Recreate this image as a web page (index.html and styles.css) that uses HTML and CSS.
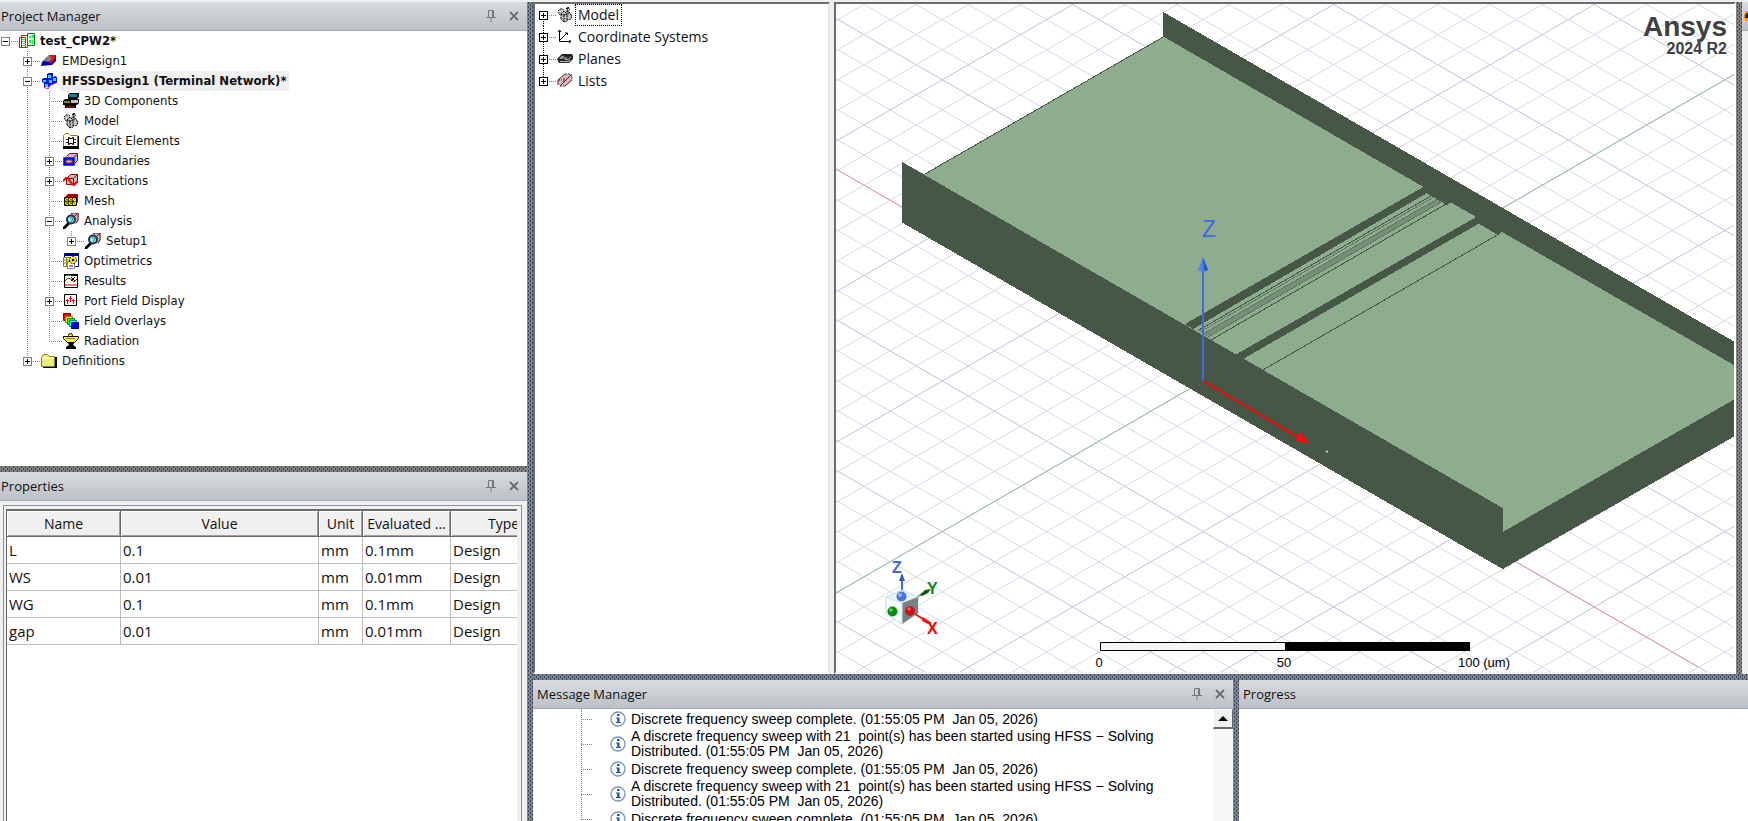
FILE: index.html
```html
<!DOCTYPE html>
<html lang="en">
<head>
<meta charset="utf-8">
<title>test_CPW2 - Ansys Electronics Desktop</title>
<link rel="stylesheet" href="styles.css">
</head>
<body>
<svg class="defs" aria-hidden="true">
  <symbol id="i-project" viewBox="0 0 16 16"><path d="M2.500 2.500h6v12h-6zM.5 4.500h6v10h-6z" fill="#fff" stroke="#008000"/><path d="M8.500.5h7v12h-7z" fill="#fff" stroke="#008000"/><path d="M10 3h2v2h-2zM13 2h2v3h-2zM10 7h2v3h-2zM13 7h1v4h-1zM3 6h3v1H3zM3 8h3v1H3zM4 10h3v1H4zM3 12h4v1H3z" fill="#0f4"/></symbol>
  <symbol id="i-em" viewBox="0 0 16 16"><path d="M1 9l5-5 9-2v5l-5 5-10 1z" fill="#00c"/><path d="M2 8l6-6h6l-5 7z" fill="#808080"/><path d="M8 2l5 0q2 2 0 5l-3 3-3-1 3-2q2-3-2-4z" fill="#f00"/><path d="M1 10h9l5-5v3l-4 4H1z" fill="#00a"/></symbol>
  <symbol id="i-hfss" viewBox="0 0 16 16"><path d="M3 14l3 1 4-1 2-3 3-2V5h1v5l-3 1-3 3-3 2-4-1z" fill="#f00"/><path d="M6 1l2-1h4v4l3-1 1 2v4l-4 2-2 1-2 2H3v-4l-2-1V6l2-1h3z" fill="#00f"/><path d="M7 2h3v3H7zM2 7h3v2H2zM12 5h3v3h-3zM8 7h3v3H8zM4 11h3v3H4z" fill="#0ef"/></symbol>
  <symbol id="i-3d" viewBox="0 0 16 16"><path d="M5 2l2-2h9v4l-2 2H5z" fill="#000"/><path d="M6 2l1-1h8l-1 1v2H6z" fill="#088"/><path d="M0 8l2-2h14v4l-2 2H0z" fill="#000"/><path d="M1 8h6v2H1z" fill="#880"/><path d="M8 7h7v3H8z" fill="#c0c0c0"/><path d="M2 12h11v3H2z" fill="#000"/><path d="M3 13h8v2H3z" fill="#900"/></symbol>
  <symbol id="i-model" viewBox="0 0 16 16"><path d="M1 4l3-2 3 3 3-4 2 3 3 4-1 3-4 1-3 3-4-3 1-4z" fill="#c0c0c0"/><path d="M1 4l2-2h3l1 2M1 5l2 3M4 7l3-3 3 3-3 1zM4 7v5l3 3 3-1V7M7 8v7M10 5l1-5M11 0v8M9 2l2-2 2 3M12 5l3 4-1 3-4 1" fill="none" stroke="#000" stroke-width="1" stroke-dasharray="2 .7"/></symbol>
  <symbol id="i-circuit" viewBox="0 0 16 16"><path d="M.5 13.500v-11l2-2h3l2 2h7v11z" fill="#fffff0" stroke="#880"/><path d="M0 13h15V3h1v13H0z" fill="#000"/><path d="M3 6h3v1H3zM3 9h3v1H3zM10 6h3v1h-3zM10 9h3v1h-3z" fill="#900"/><path d="M5.500 4.500h1v1h3v-1h1v7h-1v-1h-3v1h-1z" fill="#fff" stroke="#000"/></symbol>
  <symbol id="i-bound" viewBox="0 0 16 16"><path d="M3 3l3-2h9v7l-3 3H3z" fill="#c0c0c0"/><path d="M3.500 3.500l3-3h8v7l-3 3M11 4l4-3" fill="none" stroke="#900"/><path d="M1.500 5.500h9v6h-9z" fill="#ccc" stroke="#00f" stroke-width="2.500"/><path d="M3 7h6v3H3z" fill="#ccc" stroke="#900"/></symbol>
  <symbol id="i-excite" viewBox="0 0 16 16"><path d="M3.500 5.500l4-4h7v6l-4 4h-7z" fill="#c0c0c0" stroke="#900"/><path d="M3 5.500h7.500v6M10.500 5.500l4-4" fill="none" stroke="#900"/><path d="M0 8l3-3 2 0 4 6 2 1 4-4" fill="none" stroke="#f00" stroke-width="2"/></symbol>
  <symbol id="i-mesh" viewBox="0 0 16 16"><path d="M2 4l3-3h10v8l-3 3z" fill="#900"/><path d="M1.500 4.500h12v8h-12z" fill="#ff0" stroke="#000"/><path d="M1 8.500h12M5.500 4v9M9.500 4v9M2 5l4 3.500L2 12M6 5l4 3.500L6 12M13 5L9.500 8.500 13 12M6 5L2 8.500 6 12M10 5L6 8.500l4 3.500" fill="none" stroke="#000" stroke-width=".6"/></symbol>
  <symbol id="i-analysis" viewBox="0 0 16 16"><path d="M6 3l3-3h7v7l-3 4H8z" fill="#c0c0c0"/><path d="M8 1l1-1h6v7l-2 3M12 3l3-3" fill="none" stroke="#900"/><path d="M5 9l-5 5v2h2l5-5z" fill="#000"/><circle cx="8" cy="6.500" r="4" fill="#9ef" stroke="#234" stroke-width="2"/><path d="M7 5h3v1L8 9" stroke="#088" fill="none"/></symbol>
  <symbol id="i-optim" viewBox="0 0 16 16"><path d="M1.500.5h14v13h-14z" fill="#fff" stroke="#00a"/><path d="M2 0h14v3H2z" fill="#008"/><path d="M.5 4.500h8v9h-8z" fill="#fff" stroke="#880"/><path d="M1 7h7M1 10h7M3.500 4v9" stroke="#880"/><path d="M4.500 8.500h7v7h-7z" fill="#fff" stroke="#888"/><circle cx="10" cy="7" r="3.500" fill="#ff0" stroke="#000" stroke-dasharray="2 1"/><circle cx="10" cy="7" r="1.300" fill="#000"/><path d="M6 13h4" stroke="#00f"/></symbol>
  <symbol id="i-results" viewBox="0 0 16 16"><path d="M1.500 1.500h13v13h-13z" fill="#fff" stroke="#000"/><path d="M1 1h14v2H1z" fill="#000"/><path d="M3 2h5v1H3z" fill="#0a0"/><path d="M2 8l3-3 3 1 3 3 3-3M2 12h12" fill="none" stroke="#c00"/><path d="M8 4l4 4M12 4L8 8" stroke="#000"/></symbol>
  <symbol id="i-port" viewBox="0 0 16 16"><path d="M1.500 1.500h12v11h-12z" fill="#fff" stroke="#000"/><path d="M4.500 11V6M3 7.500h3M7.500 9V3M6 5.500h3M10.500 11V6M9 7.500h3" fill="none" stroke="#f00"/></symbol>
  <symbol id="i-field" viewBox="0 0 16 16"><path d="M.5.5h7v7h-7z" fill="#f00" stroke="#800"/><path d="M2.500 3.500h7v6h-7z" fill="#ff0" stroke="#880"/><path d="M4.500 5.500h7v6h-7z" fill="#0f0" stroke="#080"/><path d="M6.500 7.500h7v6h-7z" fill="#0ff" stroke="#088"/><path d="M8.500 9.500h7v6h-7z" fill="#00f" stroke="#008"/></symbol>
  <symbol id="i-rad" viewBox="0 0 16 16"><circle cx="7.500" cy="2.500" r="2" fill="#ff0" stroke="#000"/><path d="M.5 3.500h15v2l-4 4h-7l-4-4z" fill="#ff0" stroke="#000"/><path d="M3 5.500h9" stroke="#880"/><path d="M5 10h6l-1 2 3 2v2H3v-2l3-2z" fill="#000"/></symbol>
  <symbol id="i-folder" viewBox="0 0 16 16"><path d="M2 14h13V5h-1" fill="none" stroke="#000" stroke-width="2"/><path d="M.5 4.500l2-3h4l2 2h5v10H.5z" fill="#ee7" stroke="#880"/><path d="M1 5h12" stroke="#fff"/></symbol>
  <symbol id="i-cs" viewBox="0 0 16 16"><path d="M2.500 1v11.500H14M2 12l8-8M1 3l1.500-2L4 3M12 11l2 1.500-2 1.500M8 4h2.500v2" fill="none" stroke="#000"/></symbol>
  <symbol id="i-planes" viewBox="0 0 16 16"><path d="M0 8l5-5h10l1 2v3l-4 4H2z" fill="#222"/><path d="M2 8l3-3h2l-3 3zM8 8h3l3-3v1l-3 3H8zM3 10h8l3-2-2 3H3z" fill="#bbb"/><path d="M6 6h5l-2 2H5z" fill="#777"/></symbol>
  <symbol id="i-lists" viewBox="0 0 16 16"><path d="M1 7l7-6h6l1 1v5l-7 6H3l-2-2z" fill="#c0c0c0"/><path d="M1 7l7-6M1 7v5M3 13L14 2M8 13l7-6M7 5v4" fill="none" stroke="#900"/><path d="M8 1h6l1 2v4M3 13h5M1 7h4" fill="none" stroke="#444" stroke-dasharray="2 1"/></symbol>
  <symbol id="i-info" viewBox="0 0 16 16"><circle cx="8" cy="8" r="7" fill="#fff" stroke="#7d93b8" stroke-width="1.300"/><path d="M7 3h2.500v2H7zM6 6.500h3.500V11H11v1H6v-1h1.200V7.500H6z" fill="#1d4fc4"/></symbol>
  <symbol id="i-pin" viewBox="0 0 10 12"><path d="M2.500 7V.5h5V7M6.500 1v6M0 7.500h10M5 8v4" fill="none" stroke="#777"/></symbol>
  <symbol id="i-close" viewBox="0 0 10 10"><path d="M1 1l8 8M9 1L1 9" stroke="#6c6c6c" stroke-width="1.800"/></symbol>
</svg>

<main class="app">
  <div class="side">
    <section class="panel">
      <header class="bar"><h2>Project Manager</h2><button class="tool" aria-label="Auto hide"><svg width="10" height="12"><use href="#i-pin"/></svg></button><button class="tool" aria-label="Close"><svg width="10" height="10"><use href="#i-close"/></svg></button></header>
      <div class="body">
        <ul class="tree root">
          <li><div class="row strong"><span class="twig"><button class="exp open" aria-label="Collapse"></button></span><svg class="ico"><use href="#i-project"/></svg><span class="lbl">test_CPW2*</span></div>
            <ul class="tree">
              <li><div class="row"><span class="twig"><button class="exp" aria-label="Expand"></button></span><svg class="ico"><use href="#i-em"/></svg><span class="lbl">EMDesign1</span></div></li>
              <li><div class="row strong"><span class="twig"><button class="exp open" aria-label="Collapse"></button></span><svg class="ico"><use href="#i-hfss"/></svg><span class="lbl sel">HFSSDesign1 (Terminal Network)*</span></div>
                <ul class="tree">
                  <li><div class="row"><span class="twig"></span><svg class="ico"><use href="#i-3d"/></svg><span class="lbl">3D Components</span></div></li>
                  <li><div class="row"><span class="twig"></span><svg class="ico"><use href="#i-model"/></svg><span class="lbl">Model</span></div></li>
                  <li><div class="row"><span class="twig"></span><svg class="ico"><use href="#i-circuit"/></svg><span class="lbl">Circuit Elements</span></div></li>
                  <li><div class="row"><span class="twig"><button class="exp" aria-label="Expand"></button></span><svg class="ico"><use href="#i-bound"/></svg><span class="lbl">Boundaries</span></div></li>
                  <li><div class="row"><span class="twig"><button class="exp" aria-label="Expand"></button></span><svg class="ico"><use href="#i-excite"/></svg><span class="lbl">Excitations</span></div></li>
                  <li><div class="row"><span class="twig"></span><svg class="ico"><use href="#i-mesh"/></svg><span class="lbl">Mesh</span></div></li>
                  <li><div class="row"><span class="twig"><button class="exp open" aria-label="Collapse"></button></span><svg class="ico"><use href="#i-analysis"/></svg><span class="lbl">Analysis</span></div>
                    <ul class="tree">
                      <li><div class="row"><span class="twig"><button class="exp" aria-label="Expand"></button></span><svg class="ico"><use href="#i-analysis"/></svg><span class="lbl">Setup1</span></div></li>
                    </ul>
                  </li>
                  <li><div class="row"><span class="twig"></span><svg class="ico"><use href="#i-optim"/></svg><span class="lbl">Optimetrics</span></div></li>
                  <li><div class="row"><span class="twig"></span><svg class="ico"><use href="#i-results"/></svg><span class="lbl">Results</span></div></li>
                  <li><div class="row"><span class="twig"><button class="exp" aria-label="Expand"></button></span><svg class="ico"><use href="#i-port"/></svg><span class="lbl">Port Field Display</span></div></li>
                  <li><div class="row"><span class="twig"></span><svg class="ico"><use href="#i-field"/></svg><span class="lbl">Field Overlays</span></div></li>
                  <li><div class="row"><span class="twig"></span><svg class="ico"><use href="#i-rad"/></svg><span class="lbl">Radiation</span></div></li>
                </ul>
              </li>
              <li><div class="row"><span class="twig"><button class="exp" aria-label="Expand"></button></span><svg class="ico"><use href="#i-folder"/></svg><span class="lbl">Definitions</span></div></li>
            </ul>
          </li>
        </ul>
      </div>
    </section>
    <div class="split"></div>
    <section class="panel">
      <header class="bar"><h2>Properties</h2><button class="tool" aria-label="Auto hide"><svg width="10" height="12"><use href="#i-pin"/></svg></button><button class="tool" aria-label="Close"><svg width="10" height="10"><use href="#i-close"/></svg></button></header>
      <div class="props">
        <div class="frame"><div class="sheet">
          <table>
            <colgroup><col class="c-name"><col class="c-value"><col class="c-unit"><col class="c-eval"><col class="c-type"></colgroup>
            <thead><tr><th>Name</th><th>Value</th><th>Unit</th><th>Evaluated ...</th><th>Type</th></tr></thead>
            <tbody>
              <tr><td>L</td><td>0.1</td><td>mm</td><td>0.1mm</td><td>Design</td></tr>
              <tr><td>WS</td><td>0.01</td><td>mm</td><td>0.01mm</td><td>Design</td></tr>
              <tr><td>WG</td><td>0.1</td><td>mm</td><td>0.1mm</td><td>Design</td></tr>
              <tr><td>gap</td><td>0.01</td><td>mm</td><td>0.01mm</td><td>Design</td></tr>
            </tbody>
          </table>
        </div></div>
      </div>
    </section>
  </div>
  <div class="split"></div>
  <div class="work">
    <div class="upper">
      <nav class="pane history">
        <ul class="tree model">
          <li><div class="row"><span class="twig"><button class="exp" aria-label="Expand"></button></span><svg class="ico"><use href="#i-model"/></svg><span class="lbl focus">Model</span></div></li>
          <li><div class="row"><span class="twig"><button class="exp" aria-label="Expand"></button></span><svg class="ico"><use href="#i-cs"/></svg><span class="lbl">Coordinate Systems</span></div></li>
          <li><div class="row"><span class="twig"><button class="exp" aria-label="Expand"></button></span><svg class="ico"><use href="#i-planes"/></svg><span class="lbl">Planes</span></div></li>
          <li><div class="row"><span class="twig"><button class="exp" aria-label="Expand"></button></span><svg class="ico"><use href="#i-lists"/></svg><span class="lbl">Lists</span></div></li>
        </ul>
      </nav>
      <section class="pane viewer">
        <svg class="scene" viewBox="836 4 898 668" preserveAspectRatio="xMidYMid slice">
          <defs>
            <g id="down"><path d="M836 199.200l898 518.500M836 229.300l898 518.500M836 259.400l898 518.500M836 289.500l898 518.500" class="minor"/><path d="M836 169l898 518.500" class="major"/></g>
            <g id="up"><path d="M836 623.100l898-518.500M836 653.200l898-518.500M836 683.300l898-518.500M836 713.500l898-518.500" class="minor"/><path d="M836 593l898-518.500" class="major"/></g>
          </defs>
          <g>
            <use href="#down" y="-753"/><use href="#down" y="-602.400"/><use href="#down" y="-451.800"/><use href="#down" y="-301.200"/><use href="#down" y="-150.600"/><use href="#down"/><use href="#down" y="150.600"/><use href="#down" y="301.200"/><use href="#down" y="451.800"/>
            <use href="#up" y="-602.400"/><use href="#up" y="-451.800"/><use href="#up" y="-301.200"/><use href="#up" y="-150.600"/><use href="#up"/><use href="#up" y="150.600"/><use href="#up" y="301.200"/><use href="#up" y="451.800"/>
          </g>
          <path d="M836 169l862 498" class="axis-x"/>
          <path d="M836 593l898-518.500" class="axis-y"/>
          <g shape-rendering="crispEdges">
            <path class="top" d="M925 174.500L1163 36.500L1450 200L1734 364.500V400L1502.700 532V569L902 222.500V162z"/>
            <path class="edge" d="M925 174L1164 36.500"/>
            <path class="wall" d="M1185 324L1424 186.500L1428 192.500L1193 329z"/>
            <path class="slot" d="M1203 334L1438 198.500L1443 201L1208 337z"/>
            <path class="edge" d="M1198 330.500L1431 196"/>
            <path class="rim" d="M1200 332L1433 197.500M1203 334L1438 198.500M1208 337L1443 201"/>
            <path class="edge" d="M1211 340L1447 203.500"/>
            <path class="wall" d="M1236 354.500L1477 216.500L1479 223.500L1243 359z"/>
            <path class="edge" d="M1262 370.500L1499 234"/>
            <path class="wall" d="M1163.300 12L1734 341.500V365L1502 232L1498 235L1478 223L1477 217.500L1451 202.500L1447 205L1426 193L1423.500 187L1163.300 36.500z"/>
            <path class="wall" d="M902 162L1502.700 508V532L1734 399.500V436.500L1502.700 569L902 222.500z"/>
          </g>
          <path d="M1502.500 532v37M905 190L1498 532M905 200L1498 543" class="seam"/>
          <path d="M1203 268v113" stroke="#4169e1" stroke-width="2"/>
          <path d="M1203 257l5 13q-5 3-10 0z" fill="#4a86f5"/><path d="M1203 257l5 13-4 1z" fill="#2c55c0"/>
          <path d="M1203 381L1298 437" stroke="#f00" stroke-width="2"/>
          <path d="M1300 432l-5 8q5 3 15 3z" fill="#e11"/>
          <circle cx="1327" cy="451.500" r="1" fill="#eee"/>
          <text x="1202" y="237" class="zbig">Z</text>

          <g>
            <path d="M902 590v-15" stroke="#4169e1" stroke-width="2"/><path d="M902 573l3 8h-6z" fill="#3558c8"/>
            <path d="M917 597l8-5" stroke="#999" stroke-width="2"/><path d="M920 595l5-5 6-1-3 4-6 3z" fill="#0a5a14"/>
            <path d="M902 590l16 7v16l-16 11-16-10v-17z" fill="#e6f4f8" stroke="#c4dbe4"/>
            <path d="M902 603l16-6v16l-16 11z" fill="#748484"/>
            <path d="M886 597l16 6v21l-16-10z" fill="#f6fbfc" stroke="#cfe0e6"/>
            <path d="M915 614l13 8" stroke="#e11" stroke-width="2"/><path d="M923 617l9 6-4 1-6-3z" fill="#f11"/>
            <circle cx="901.500" cy="596.500" r="5" fill="#4a72dc"/><circle cx="900" cy="595" r="2" fill="#9ab6f8"/>
            <circle cx="892.500" cy="611.500" r="5" fill="#0a8a14"/><circle cx="891" cy="610" r="1.800" fill="#4fdc54"/>
            <circle cx="910" cy="611" r="5" fill="#cc1616"/><circle cx="909" cy="609" r="1.800" fill="#f55"/>
            <text x="892" y="573" class="tri tz">Z</text><text x="927" y="594" class="tri ty">Y</text><text x="927" y="634" class="tri tx">X</text>
          </g>

          <path d="M1100.500 642.500h369v8h-369z" fill="#f5f5f5" stroke="#000"/><path d="M1285 642h185v9h-185z"/>
          <g class="scale"><text x="1099" y="667">0</text><text x="1284" y="667">50</text><text x="1484" y="667">100 (um)</text></g>
          <text x="1727" y="36" class="brand">Ansys</text><text x="1727" y="54" class="release">2024 R2</text>
        </svg>
      </section>
      <div class="split"></div>
      <aside class="panel dock"><header class="bar"><svg width="6" height="10" viewBox="0 0 6 10"><path d="M6 0H4L2 3v4l2 3h2z" fill="#f90"/><path d="M6 2H5L3 4v3h3z" fill="#224"/></svg></header></aside>
    </div>
    <div class="split"></div>
    <div class="lower">
      <section class="panel">
        <header class="bar roomy"><h2>Message Manager</h2><button class="tool" aria-label="Auto hide"><svg width="10" height="12"><use href="#i-pin"/></svg></button><button class="tool" aria-label="Close"><svg width="10" height="10"><use href="#i-close"/></svg></button></header>
        <div class="messages">
          <ul class="log">
            <li><svg class="ico"><use href="#i-info"/></svg><p>Discrete frequency sweep complete. (01:55:05 PM&nbsp; Jan 05, 2026)</p></li>
            <li><svg class="ico"><use href="#i-info"/></svg><p>A discrete frequency sweep with 21&nbsp; point(s) has been started using HFSS − Solving<br>Distributed. (01:55:05 PM&nbsp; Jan 05, 2026)</p></li>
            <li><svg class="ico"><use href="#i-info"/></svg><p>Discrete frequency sweep complete. (01:55:05 PM&nbsp; Jan 05, 2026)</p></li>
            <li><svg class="ico"><use href="#i-info"/></svg><p>A discrete frequency sweep with 21&nbsp; point(s) has been started using HFSS − Solving<br>Distributed. (01:55:05 PM&nbsp; Jan 05, 2026)</p></li>
            <li><svg class="ico"><use href="#i-info"/></svg><p>Discrete frequency sweep complete. (01:55:05 PM&nbsp; Jan 05, 2026)</p></li>
          </ul>
          <div class="scroll"><button aria-label="Scroll up"><svg width="10" height="5" viewBox="0 0 10 5"><path d="M0 5l5-5 5 5z"/></svg></button></div>
        </div>
      </section>
      <div class="split"></div>
      <section class="panel">
        <header class="bar roomy"><h2>Progress</h2></header>
        <div class="body"></div>
      </section>
    </div>
  </div>
</main>
</body>
</html>
```
FILE: styles.css
```css
* { box-sizing: border-box; }
body { margin: 0; background: #f0f0f0; color: #111; font: 14px "Open Sans", "Noto Sans", sans-serif; }
button { padding: 0; border: 0; background: none; }
ul { margin: 0; padding: 0; list-style: none; }
h2, p { margin: 0; }
.defs { display: none; }

.app { display: grid; grid-template-columns: minmax(0, 527fr) 6px minmax(0, 1215fr); height: 100vh; padding-top: 2px; overflow: hidden; }
.side { display: grid; grid-template-rows: minmax(0, 464fr) 6px minmax(0, 349fr); min-height: 0; }
.work { display: grid; grid-template-rows: minmax(0, 672fr) 6px minmax(0, 141fr); min-height: 0; }
.upper { display: grid; grid-template-columns: minmax(0, 301fr) minmax(0, 902fr) 6px 6px; min-height: 0; }
.lower { display: grid; grid-template-columns: minmax(0, 700fr) 6px minmax(0, 509fr); min-height: 0; }

.split {
  background:
    conic-gradient(from 270deg at 1px 2px, #34456c 90deg, transparent 0) 1px 0 / 4px 4px,
    conic-gradient(from 270deg at 1px 2px, #34456c 90deg, transparent 0) 3px 2px / 4px 4px,
    #838383;
}

.panel { display: flex; flex-direction: column; min-width: 0; min-height: 0; overflow: hidden; }
.bar { display: flex; align-items: center; gap: 11px; flex: none; height: 29px; padding: 0 7px 0 1px; border-bottom: 1px solid #a9abad; background: linear-gradient(#d8dce1, #bcc1c6); }
.bar.roomy { padding-left: 4px; }
.bar h2 { flex: 1; font-size: 13px; font-weight: 400; line-height: 20px; }
.tool { display: flex; align-items: center; justify-content: center; width: 12px; height: 16px; }
.body { flex: 1; min-height: 0; background: #fff; overflow: hidden; }
.dock { background: #f0f0f0; }
.dock .bar { padding: 0; justify-content: flex-end; }

.tree.root { font: 13px/20px "DejaVu Sans Condensed", "DejaVu Sans", sans-serif; }
.tree .tree { margin-left: 22px; }
.tree .tree > li { background: repeating-linear-gradient(#808080 0 1px, transparent 1px 2px) 5px 0 / 1px 100% no-repeat; }
.tree .tree > li:last-child { background-size: 1px 10px; }
.row { display: flex; align-items: center; height: 20px; white-space: nowrap; }
.strong { font-weight: 700; }
.twig { display: flex; align-items: center; flex: none; width: 19px; height: 20px; padding-left: 1px; background: repeating-linear-gradient(90deg, #808080 0 1px, transparent 1px 2px) 5px 10px / 13px 1px no-repeat; }
.exp { width: 9px; height: 9px; border: 1px solid #808080; background: linear-gradient(#000, #000) center / 5px 1px no-repeat, linear-gradient(#000, #000) center / 1px 5px no-repeat, #fff; }
.exp.open { background: linear-gradient(#000, #000) center / 5px 1px no-repeat, #fff; }
.ico { flex: none; width: 16px; height: 16px; }
.lbl { margin-left: 3px; padding: 0 2px; }
.sel { background: #f0f0f0; }

.pane { min-width: 0; min-height: 0; background: #fff; overflow: hidden; border: 2px solid #fff; border-top-color: #6c6c6c; border-left-color: #6c6c6c; }
.history { margin-right: 4px; border-right-color: #e3e3e3; }
.tree.model { padding-left: 3px; font-size: 14px; }
.model .row { height: 22px; }
.model > li { background: repeating-linear-gradient(#000 0 1px, transparent 1px 2px) 5px 0 / 1px 100% no-repeat; }
.model > li:first-child { background-position: 5px 11px; }
.model > li:last-child { background-size: 1px 11px; }
.model .exp { border-color: #000; }
.model .lbl { line-height: 20px; }
.focus { outline: 1px dotted #000; }

.viewer { border-bottom-color: #f0f0f0; }
.scene { display: block; width: 100%; height: 100%; font-family: "Liberation Sans", Arial, sans-serif; }
.minor { stroke: #d8d8ea; fill: none; }
.major { stroke: #c2c0de; fill: none; }
.axis-x { stroke: #e59a9a; }
.axis-y { stroke: #96bf96; }
.top { fill: #8ead8e; }
.wall { fill: #465747; }
.slot { fill: #768f76; }
.edge { stroke: #465747; fill: none; }
.rim { stroke: #5f785f; fill: none; }
.seam { stroke: #3f5c3f; stroke-width: 1; fill: none; opacity: .4; }
.zbig { font-size: 23px; fill: #4169e1; }
.tri { font-size: 16px; font-weight: 700; }
.tz { fill: #4169e1; }
.ty { fill: #0a8a14; }
.tx { fill: #f00; }
.scale { font-size: 13px; text-anchor: middle; }
.brand, .release { font-weight: 700; fill: #404040; text-anchor: end; }
.brand { font-size: 28px; }
.release { font-size: 16px; }

.props { flex: 1; min-height: 0; padding: 4px 5px 0 3px; background: #f0f0f0; }
.frame { height: 100%; padding: 3px 4px 0 2px; border: 1px solid #8390a2; border-bottom: 0; }
.sheet { height: 100%; overflow: hidden; background: #fff; border-top: 2px solid #696969; border-left: 1px solid #696969; }
table { width: 550px; border-collapse: separate; border-spacing: 0; table-layout: fixed; font-size: 15px; line-height: 20px; }
th, td { height: 27px; padding: 0 2px; text-align: left; font-weight: 400; white-space: nowrap; overflow: hidden; border-right: 1px solid #bdbdbd; border-bottom: 1px solid #bdbdbd; }
th { height: 26px; padding: 0; font-size: 14px; text-align: center; background: #f0f0f0; border-right: 1px solid #696969; border-bottom: 1px solid #696969; box-shadow: inset 1px 1px #fff, inset -1px -1px #a0a0a0; }
.c-name { width: 114px; }
.c-value { width: 198px; }
.c-unit { width: 44px; }
.c-eval { width: 88px; }
.c-type { width: 106px; }

.messages { display: flex; flex: 1; min-height: 0; overflow: hidden; background: #fff; }
.log { flex: 1; min-width: 0; padding-left: 48px; font: 14px/15px "Liberation Sans", Arial, sans-serif; color: #000; }
.log li { display: flex; align-items: center; gap: 5px; min-height: 20px; padding-left: 29px; background: repeating-linear-gradient(#808080 0 1px, transparent 1px 2px) 0 0 / 1px 100% no-repeat, repeating-linear-gradient(90deg, #808080 0 1px, transparent 1px 2px) 0 50% / 11px 1px no-repeat; }
.log p { white-space: nowrap; }
.scroll { flex: none; width: 20px; background: #f7f7f7; }
.scroll button { display: flex; align-items: center; justify-content: center; width: 20px; height: 20px; background: #f0f0f0; border: 1px solid #fff; border-right-color: #696969; border-bottom: 2px solid #696969; }
```
